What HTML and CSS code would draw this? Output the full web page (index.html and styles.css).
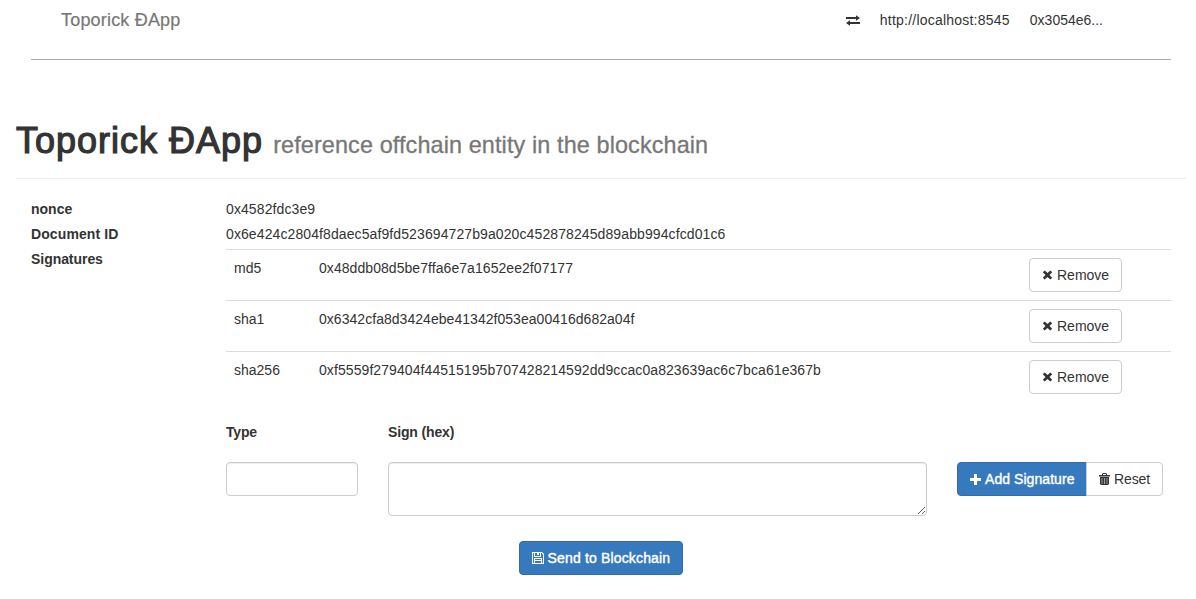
FILE: index.html
```html
<!DOCTYPE html>
<html lang="en">
<head>
<meta charset="utf-8">
<title>Toporick ÐApp</title>
<link rel="stylesheet" href="styles.css">
</head>
<body>
<div class="container">
  <nav class="navbar">
    <a class="brand">Toporick ÐApp</a>
    <div class="status">
      <svg class="icon-transfer" width="14" height="12" viewBox="0 0 14 12"><path d="M0 2h10V0.300L14 3 10 5.700V4H0zM14 7H4V5.300L0 8 4 10.700V9h10z"/></svg>
      <span class="node">http://localhost:8545</span>
      <span class="account">0x3054e6...</span>
    </div>
  </nav>

  <header class="page-header">
    <h1><span class="title">Toporick ÐApp</span> <small>reference offchain entity in the blockchain</small></h1>
  </header>

  <main class="details">
    <div class="row"><b class="label">nonce</b><span class="hash nonce">0x4582fdc3e9</span></div>
    <div class="row"><b class="label l-doc">Document ID</b><span class="hash doc">0x6e424c2804f8daec5af9fd523694727b9a020c452878245d89abb994cfcd01c6</span></div>
    <div class="row signatures">
      <b class="label l-sig">Signatures</b>
      <div class="sign-area">
        <div class="sign-row"><span>md5</span><span class="hash md5">0x48ddb08d5be7ffa6e7a1652ee2f07177</span><button class="btn remove"><svg width="11" height="10" viewBox="0 0 11 10"><path d="M2.700 .5 5.500 3 8.300 .5 10.200 2.200 7.500 5 10.200 7.800 8.300 9.500 5.500 7 2.700 9.500 .8 7.800 3.500 5 .8 2.200z"/></svg><span>Remove</span></button></div>
        <div class="sign-row"><span>sha1</span><span class="hash sha1">0x6342cfa8d3424ebe41342f053ea00416d682a04f</span><button class="btn remove"><svg width="11" height="10" viewBox="0 0 11 10"><path d="M2.700 .5 5.500 3 8.300 .5 10.200 2.200 7.500 5 10.200 7.800 8.300 9.500 5.500 7 2.700 9.500 .8 7.800 3.500 5 .8 2.200z"/></svg><span>Remove</span></button></div>
        <div class="sign-row"><span>sha256</span><span class="hash sha256">0xf5559f279404f44515195b707428214592dd9ccac0a823639ac6c7bca61e367b</span><button class="btn remove"><svg width="11" height="10" viewBox="0 0 11 10"><path d="M2.700 .5 5.500 3 8.300 .5 10.200 2.200 7.500 5 10.200 7.800 8.300 9.500 5.500 7 2.700 9.500 .8 7.800 3.500 5 .8 2.200z"/></svg><span>Remove</span></button></div>
        <form class="add-form">
          <label class="l-type">Type</label><label class="l-hex">Sign (hex)</label><span></span>
          <input class="field" type="text">
          <textarea class="field" rows="2"></textarea>
          <div class="btn-group">
            <button type="button" class="btn primary add"><svg width="11" height="11" viewBox="0 0 11 11"><path d="M4 0h3v4h4v3H7v4H4V7H0V4h4z"/></svg><span>Add Signature</span></button>
            <button type="button" class="btn reset"><svg width="11" height="12" viewBox="0 0 11 12"><path fill-rule="evenodd" d="M0 2h3V1l1-1h3l1 1v1h3v1.500H0zM4 1v1h3V1zM1 4h9v7l-1 1H2l-1-1z"/><path class="slats" d="M3 5v6M5.500 5v6M8 5v6"/></svg><span>Reset</span></button>
          </div>
        </form>
      </div>
    </div>
  </main>
  <div class="actions">
    <button class="btn primary send"><svg width="12" height="12" viewBox="0 0 12 12"><path fill-rule="evenodd" d="M0 0h10l2 2v10H0zM1 1v10h1V6h8v5h1V2.500L9.500 1H9v4H2V1zM3 1v3h5V1H7v2H5V1zM3 7v4h6V7z"/><path d="M3 8h6v1H3z"/></svg><span>Send to Blockchain</span></button>
  </div>
</div>
</body>
</html>
```
FILE: styles.css
```css
* { box-sizing: border-box; }
body {
  margin: 0;
  background: #fff;
  color: #333;
  font: 14px/20px "Liberation Sans", Arial, sans-serif;
  overflow: hidden;
}
.container { width: 1170px; margin-left: 16px; }
.navbar {
  display: flex;
  height: 60px;
  margin: 0 15px;
  padding: 10px 68px 0 30px;
  border-bottom: 1px solid #aaa;
}
.brand { font-size: 18px; color: #777; letter-spacing: .19px; -webkit-text-stroke: .2px; }
.status { display: flex; margin-left: auto; }
.icon-transfer { margin: 5px 20px 0 0; }
.node { width: 150px; letter-spacing: .22px; }
svg { fill: currentColor; flex: none; }
.page-header {
  height: 79px;
  margin: 40px 0 20px;
  padding-top: 21px;
  border-bottom: 1px solid #eee;
}
h1 { margin: 0; font-size: 36px; line-height: 40px; font-weight: 500; white-space: nowrap; }
.title { letter-spacing: 1px; -webkit-text-stroke: 1.2px #333; }
small { font-size: 23.4px; color: #777; letter-spacing: .12px; -webkit-text-stroke: .3px; }
.row { display: flex; height: 25px; padding: 0 15px; }
.label { width: 195px; }
.l-doc { letter-spacing: .1px; }
.l-sig { letter-spacing: -.05px; }
.nonce, .doc { letter-spacing: .1px; }
.md5 { letter-spacing: .06px; }
.sha1 { letter-spacing: .04px; }
.sha256 { letter-spacing: .08px; }
.signatures { height: auto; }
.sign-area { flex: 1; }
.sign-row {
  display: grid;
  grid-template-columns: 85px 710px auto;
  justify-content: start;
  height: 51px;
  padding: 8px;
  border-top: 1px solid #ddd;
}
.btn {
  display: inline-flex;
  align-items: center;
  gap: 4px;
  height: 34px;
  padding: 0 12px;
  border: 1px solid #ccc;
  border-radius: 4px;
  background: #fff;
  color: #333;
  font: 14px/20px "Liberation Sans", Arial, sans-serif;
  white-space: nowrap;
}
.remove { width: 93px; }
.primary { background: #3779bd; border-color: #2f6cab; color: #fff; }
.primary span { -webkit-text-stroke: .4px; }
.add-form {
  display: grid;
  grid-template-columns: 132px 539px 206px;
  column-gap: 30px;
  grid-template-rows: 40px auto;
  padding-top: 20px;
  align-items: start;
}
.add-form label { font-weight: 700; }
.l-type { letter-spacing: -.2px; }
.l-hex { letter-spacing: -.15px; }
.field {
  width: 100%;
  height: 34px;
  margin: 0;
  border: 1px solid #ccc;
  border-radius: 4px;
  box-shadow: inset 0 1px 1px rgba(0,0,0,.075);
}
textarea.field { display: block; height: 54px; }
.btn-group { display: flex; }
.add { width: 130px; border-radius: 4px 0 0 4px; }
.add span { letter-spacing: .06px; }
.reset { width: 77px; margin-left: -1px; border-radius: 0 4px 4px 0; }
.reset span { letter-spacing: -.1px; }
.slats { stroke: #bbb; stroke-width: .8; fill: none; }
.actions { display: flex; justify-content: center; margin-top: 25px; }
.send { width: 164px; gap: 3.5px; }
.send span { letter-spacing: .16px; }
```
